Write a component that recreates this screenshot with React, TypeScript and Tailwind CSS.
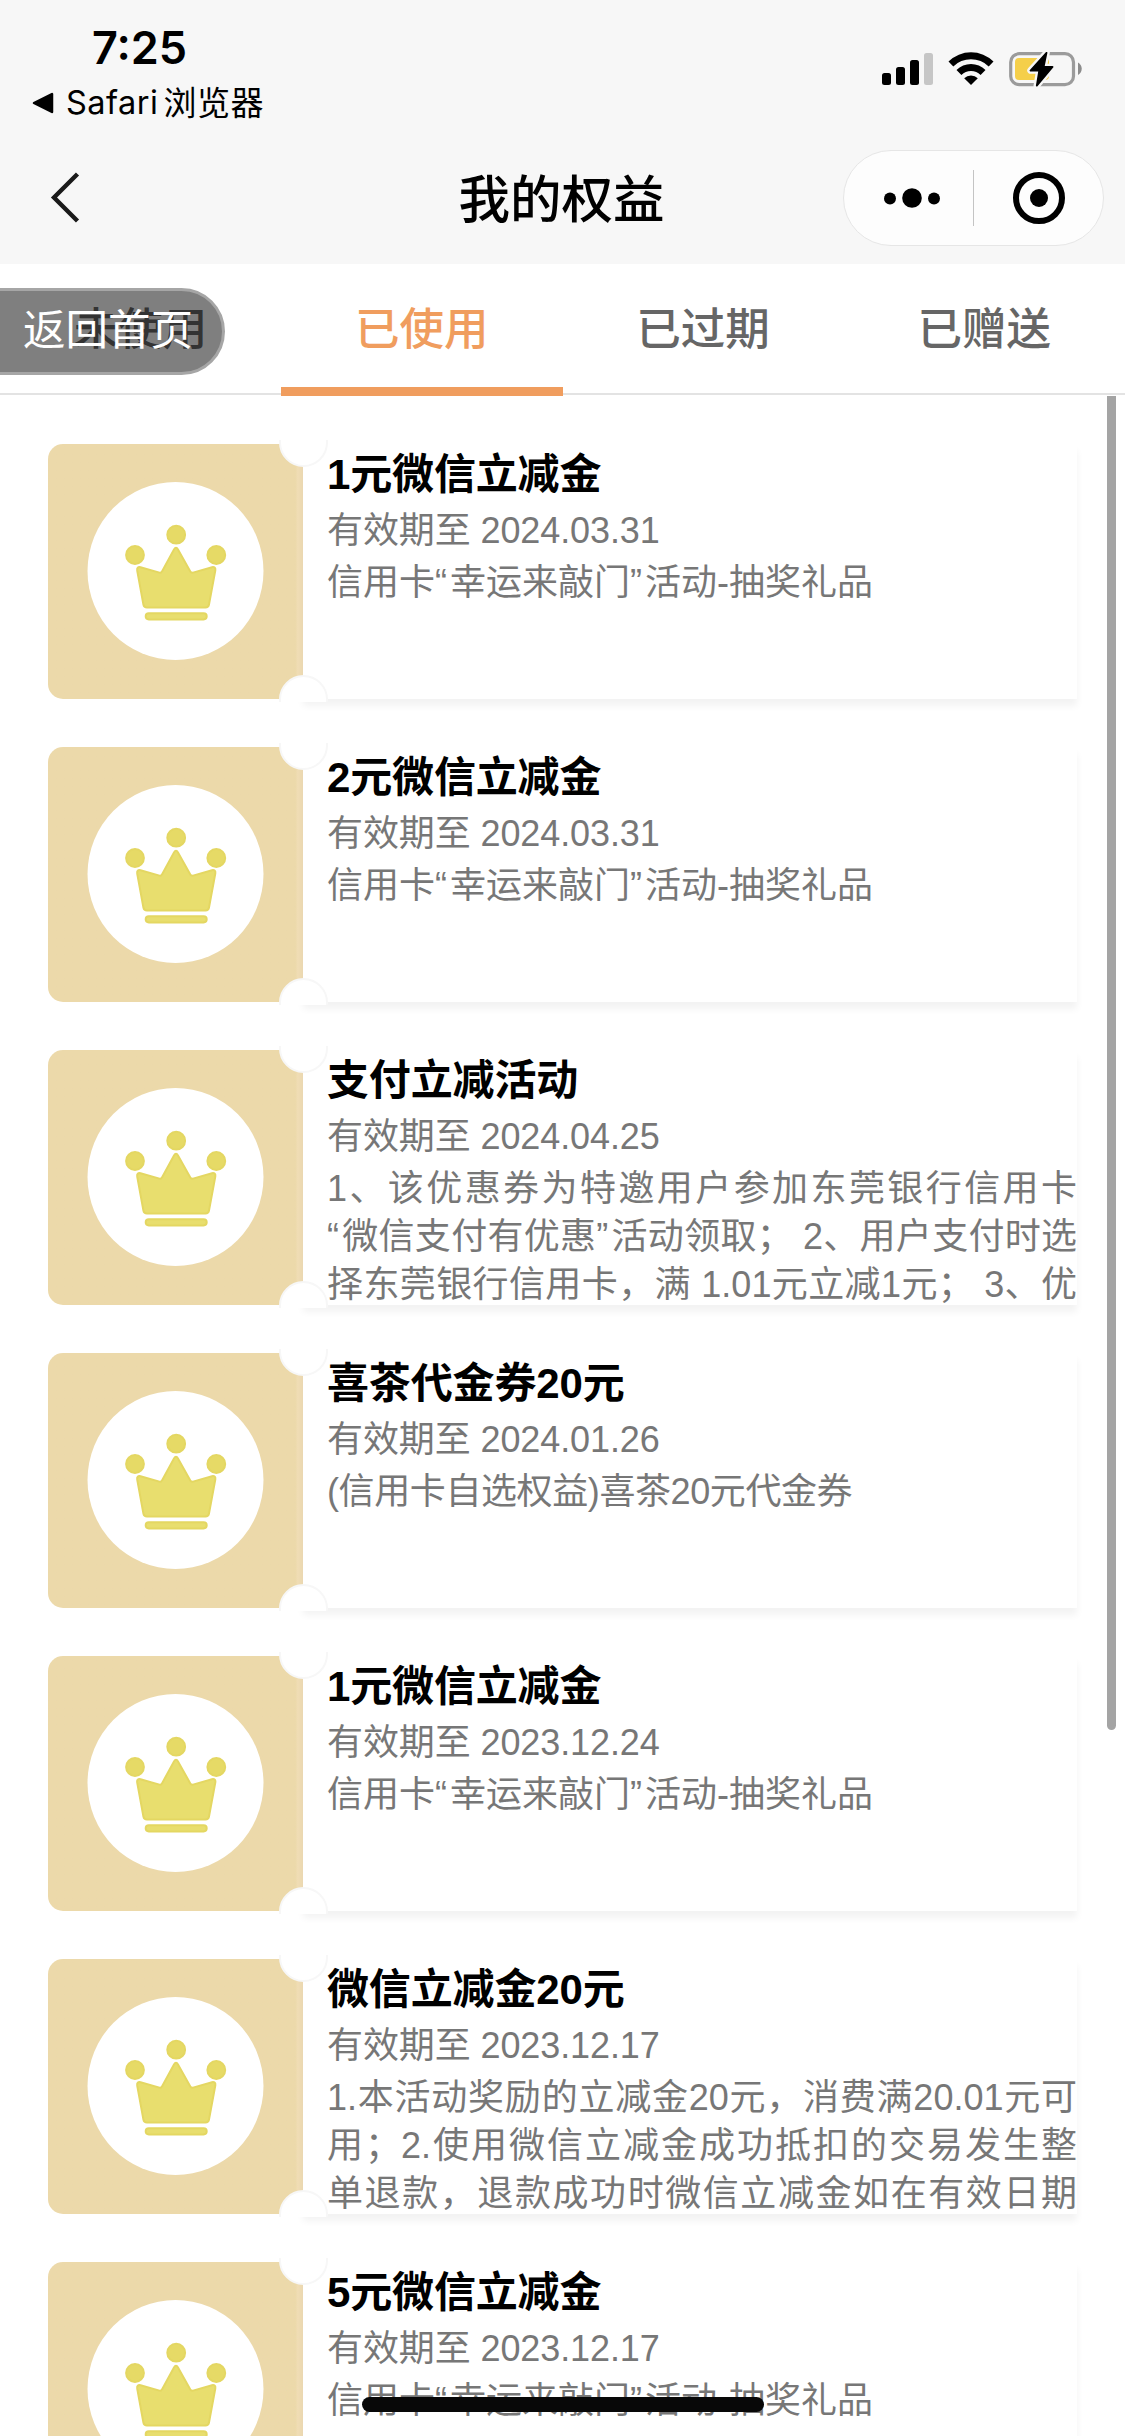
type Coupon = {
  title: string;
  date: string;
  lines: string[];
};

const tabs = ["未使用", "已使用", "已过期", "已赠送"];

const lottery = ["信用卡“幸运来敲门”活动-抽奖礼品"];

const coupons: Coupon[] = [
  { title: "1元微信立减金", date: "2024.03.31", lines: lottery },
  { title: "2元微信立减金", date: "2024.03.31", lines: lottery },
  {
    title: "支付立减活动",
    date: "2024.04.25",
    lines: [
      "1、该优惠券为特邀用户参加东莞银行信用卡",
      "“微信支付有优惠”活动领取； 2、用户支付时选",
      "择东莞银行信用卡，满 1.01元立减1元； 3、优",
    ],
  },
  {
    title: "喜茶代金券20元",
    date: "2024.01.26",
    lines: ["(信用卡自选权益)喜茶20元代金券"],
  },
  { title: "1元微信立减金", date: "2023.12.24", lines: lottery },
  {
    title: "微信立减金20元",
    date: "2023.12.17",
    lines: [
      "1.本活动奖励的立减金20元，消费满20.01元可",
      "用；2.使用微信立减金成功抵扣的交易发生整",
      "单退款，退款成功时微信立减金如在有效日期",
    ],
  },
  { title: "5元微信立减金", date: "2023.12.17", lines: lottery },
];

const StatusBar = () => (
  <div className="flex h-[132px] justify-between pl-8 pr-[43px]">
    <div className="flex flex-col font-['Inter','Noto_Sans_CJK_SC',sans-serif] text-black">
      <span className="mt-[21px] pl-[60px] text-[45px] font-semibold leading-[54px]">
        7:25
      </span>
      <div className="mt-[3px] flex items-center">
        <svg width="22" height="22" viewBox="0 0 22 22">
          <path
            d="M2 11 L20 2 V20 Z"
            fill="#000"
            stroke="#000"
            strokeWidth="2.5"
            strokeLinejoin="round"
          />
        </svg>
        <span className="ml-[12px] text-[32.5px] leading-[48px] tracking-[0.5px]">
          Safari
        </span>
        <span className="ml-[5px] mt-px text-[33px] leading-[48px] tracking-[0.5px]">
          浏览器
        </span>
      </div>
    </div>
    <div className="mt-[52px] flex h-[34px] items-start">
      <svg width="51" height="34" viewBox="0 0 51 34">
        <rect x="0" y="21" width="9" height="12" rx="2.5" />
        <rect x="14" y="15" width="9" height="18" rx="2.5" />
        <rect x="28" y="8" width="9" height="25" rx="2.5" />
        <rect x="42" y="1" width="9" height="32" rx="2.5" fill="#c6c6c6" />
      </svg>
      <svg className="ml-[15px]" width="46" height="34" viewBox="0 0 46 34">
        <path d="M0.5 9.5 A32 32 0 0 1 45.5 9.5 L40.7 14.5 A25.2 25.2 0 0 0 5.3 14.5 Z" />
        <path d="M8.5 18 A20.6 20.6 0 0 1 37.5 18 L32.6 23 A13.8 13.8 0 0 0 13.4 23 Z" />
        <path d="M16.2 26.2 A9.6 9.6 0 0 1 29.8 26.2 L23 33 Z" />
      </svg>
      <svg className="ml-[15px]" width="73" height="36" viewBox="0 0 73 36">
        <rect
          x="1.7"
          y="1.7"
          width="62.8"
          height="31"
          rx="8.5"
          fill="none"
          stroke="#9b9b9b"
          strokeWidth="3.2"
        />
        <path d="M69 10.5 C74 13 74 20.5 69 23 Z" fill="#8c8c8c" />
        <rect x="6" y="6" width="34" height="22" rx="4" fill="#f5cf4a" />
        <path
          d="M37.5 0.8 L21.5 18.5 H30.3 L27.8 33.6 L43.5 15 H34.6 Z"
          fill="#f7f7f7"
          stroke="#f7f7f7"
          strokeWidth="6.5"
          strokeLinejoin="round"
        />
        <path
          d="M37.5 0.8 L21.5 18.5 H30.3 L27.8 33.6 L43.5 15 H34.6 Z"
          stroke="#000"
          strokeWidth="1.8"
          strokeLinejoin="round"
        />
      </svg>
    </div>
  </div>
);

const NavBar = () => (
  <div className="flex h-[132px] items-center justify-between pl-[48px] pr-[21px]">
    <div className="flex w-[260px]">
      <svg width="36" height="54" viewBox="0 0 36 54">
        <path
          d="M29.5 3 L6 26.5 L29.5 50"
          fill="none"
          stroke="#1a1a1a"
          strokeWidth="4.4"
        />
      </svg>
    </div>
    <h1 className="mr-[28px] pt-[5px] text-[51.5px] font-medium leading-none text-black">
      我的权益
    </h1>
    <div className="flex h-[96px] w-[261px] items-center rounded-full border border-[#e6e6e6] bg-[#fdfdfd]">
      <svg className="ml-[40px]" width="56" height="20" viewBox="0 0 56 20">
        <circle cx="6" cy="10.5" r="6" />
        <circle cx="28" cy="10" r="9.8" />
        <circle cx="50" cy="10.5" r="6" />
      </svg>
      <div className="ml-[33px] h-[56px] w-px bg-[#c4c4c4]" />
      <svg className="ml-[39px]" width="52" height="52" viewBox="0 0 52 52">
        <circle cx="26" cy="26" r="23" fill="none" stroke="#000" strokeWidth="6" />
        <circle cx="26" cy="26" r="9" />
      </svg>
    </div>
  </div>
);

const Crown = () => (
  <svg width="255" height="255" viewBox="0 0 255 255">
    <ellipse cx="127.5" cy="127" rx="88" ry="89" fill="#fff" />
    <g fill="#e8de6e" stroke="#e4d762" strokeWidth="2">
      <circle cx="128.2" cy="90.7" r="8.9" fill="#e6da66" />
      <circle cx="87" cy="111" r="8.9" fill="#e6da66" />
      <circle cx="168.3" cy="111" r="8.9" fill="#e6da66" />
      <path
        d="M92.5 123.2 L111.5 128.6 Q113.2 129 114 127.4 L126 105.5 Q128 102 130 105.5 L142.3 127.4 Q143.2 129 145 128.6 L164 123.2 Q168 122.6 167.3 126.5 L161 160.5 Q160.4 163.5 157.5 163.5 H99 Q96 163.5 95.4 160.5 L89.2 126.5 Q88.6 122.6 92.5 123.2 Z"
        strokeLinejoin="round"
      />
      <rect x="97.7" y="169.2" width="61" height="6.2" rx="3.1" />
    </g>
  </svg>
);

// curly quotes get a little extra room
const withQuotes = (line: string) =>
  line.split(/([“”])/).map((part, index) =>
    part === "“" || part === "”" ? (
      <span key={index} className="tracking-[3px]">
        {part}
      </span>
    ) : (
      part
    )
  );

const CouponCard = ({ title, date, lines }: Coupon) => (
  <li className="relative flex h-[255px] shrink-0">
    <div className="w-[255px] shrink-0 overflow-hidden rounded-l-[15px] bg-gradient-to-r from-[#ecd9aa] from-97% to-[#f0ddb5] to-98%">
      <Crown />
    </div>
    <div className="flex-1 bg-white pl-6 shadow-[0_7px_7px_rgba(0,0,0,0.05)]">
      <h2 className="relative z-10 mt-[7px] text-[42px] font-semibold leading-[48px] tracking-[-0.15px] text-black">
        {title}
      </h2>
      <p className="mt-[8px] text-[36px] leading-[48px] tracking-[-0.1px] text-[#777]">
        有效期至 {date}
      </p>
      <div className="mt-[4px] text-[36px] leading-[48px] text-[#777]">
        {lines.map((line) => (
          <p
            key={line}
            className={
              lines.length > 1
                ? "whitespace-nowrap text-justify [text-align-last:justify]"
                : line.startsWith("(")
                  ? "tracking-[-0.4px]"
                  : ""
            }
          >
            {withQuotes(line)}
          </p>
        ))}
      </div>
    </div>
    {/* ticket notches */}
    <div className="absolute left-[231px] -top-[4px] h-[27px] w-[49px] overflow-hidden">
      <div className="-mt-[22px] h-[49px] w-[49px] rounded-full border-2 border-[#f7f7f7] bg-white" />
    </div>
    <div className="absolute left-[231px] top-[231px] h-[27px] w-[49px] overflow-hidden">
      <div className="h-[49px] w-[49px] rounded-full border-2 border-[#f7f7f7] bg-white" />
    </div>
  </li>
);

export default function App() {
  return (
    <div className="relative flex h-[2436px] w-[1125px] flex-col overflow-hidden bg-white font-['Liberation_Sans','Noto_Sans_CJK_SC',sans-serif]">
      <header className="shrink-0 bg-[#f7f7f7]">
        <StatusBar />
        <NavBar />
      </header>

      <nav className="relative flex h-[132px] shrink-0">
        {tabs.map((tab) => (
          <div
            key={tab}
            className={
              tab === "已使用"
                ? "flex flex-1 items-center justify-center border-b-[9px] border-[#f09d5e] pt-[10px] text-[44.5px] font-medium text-[#f09d5e]"
                : "mb-px flex flex-1 items-center justify-center border-b-2 border-[#e3e3e3] pt-[4px] text-[44.5px] font-medium text-[#666]"
            }
          >
            {tab}
          </div>
        ))}
        <button className="absolute left-[-3px] top-[24px] h-[87px] w-[228px] rounded-r-full border-[3px] border-[#a6a6a6] bg-black/50 pl-[23px] text-left text-[42.5px] leading-none text-white">
          返回首页
        </button>
      </nav>

      <ul className="flex min-h-0 flex-1 flex-col gap-[48px] px-[48px] pt-[48px]">
        {coupons.map((coupon, index) => (
          <CouponCard key={index} {...coupon} />
        ))}
      </ul>

      {/* scroll indicator */}
      <div className="absolute right-[9px] top-[396px] h-[1334px] w-[9px] rounded-b-full bg-[#a4a4a4]" />
      {/* home indicator */}
      <div className="absolute bottom-[24px] left-[362px] h-[15px] w-[402px] rounded-full bg-[#080808]" />
    </div>
  );
}
